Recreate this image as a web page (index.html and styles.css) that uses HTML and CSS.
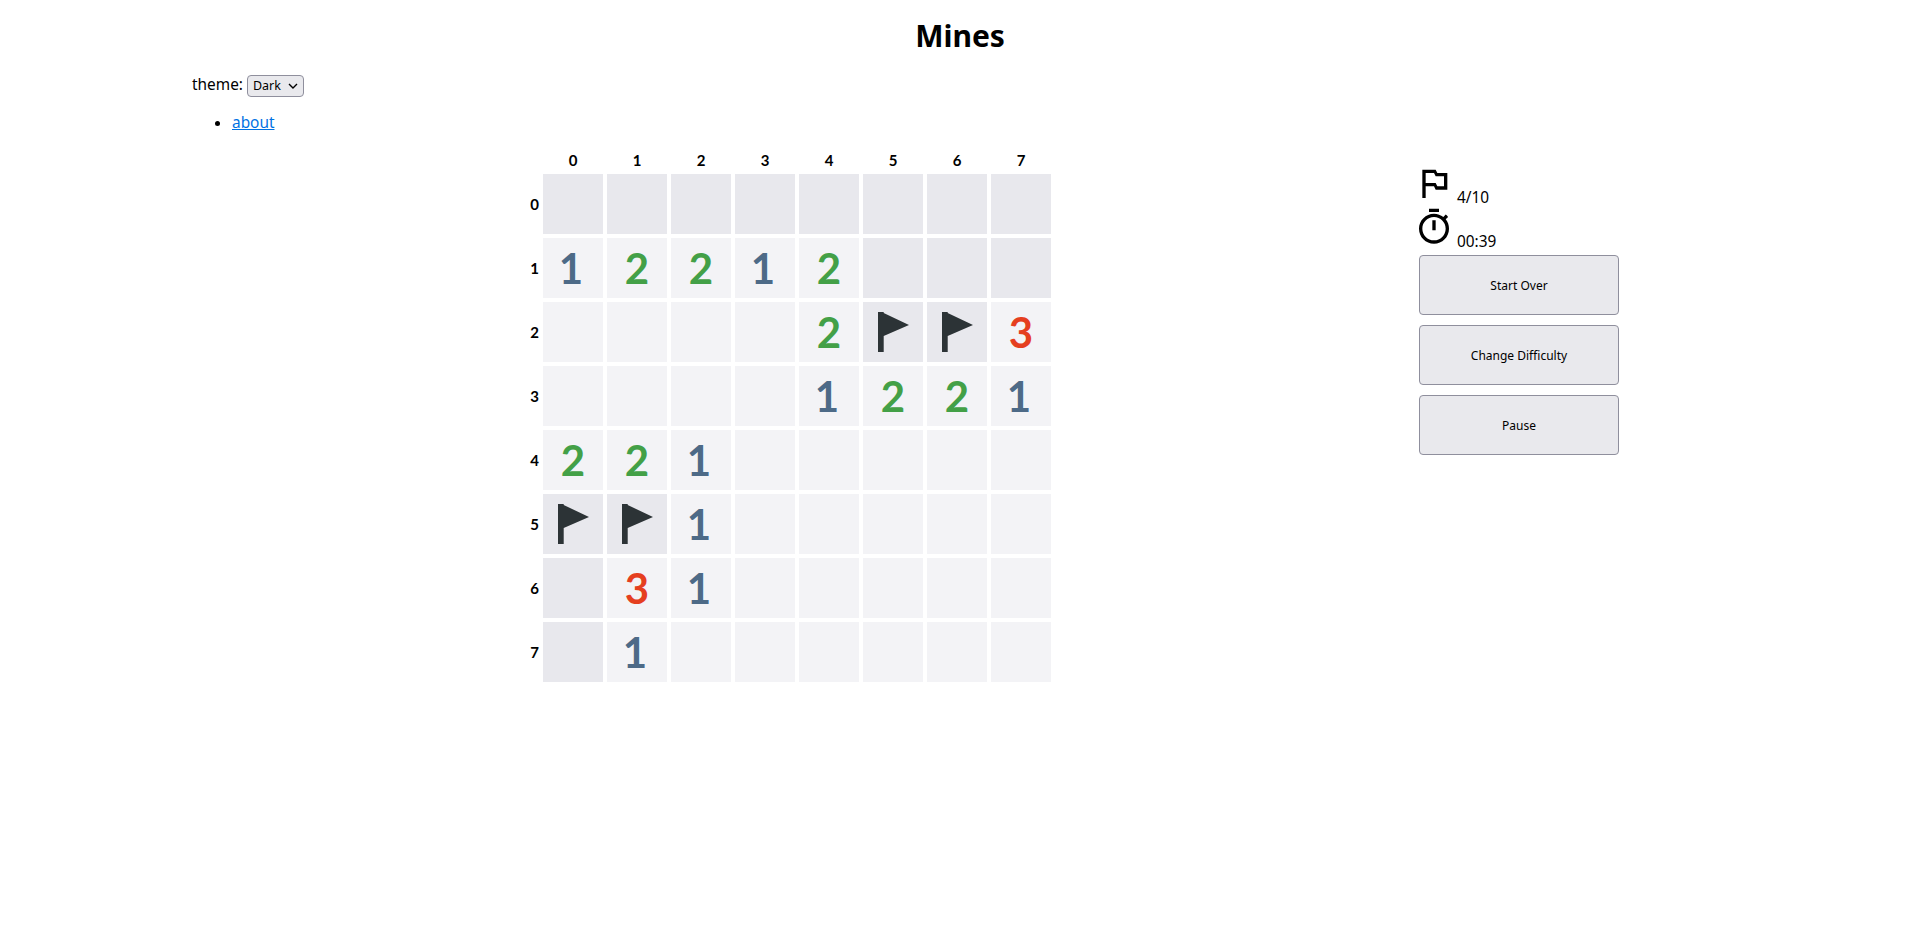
FILE: index.html
```html
<!DOCTYPE html>
<html lang="en">
<head>
  <meta charset="utf-8">
  <meta name="viewport" content="width=device-width, initial-scale=1">
  <title>Mines</title>
  <link rel="stylesheet" href="styles.css">
</head>
<body>
  <h1 class="title">Mines</h1>
  <div class="page">
    <div class="theme">
      <label for="theme">theme:</label>
      <select id="theme"><option>Dark</option><option>Light</option></select>
    </div>
    <ul class="links">
      <li><a href="#about">about</a></li>
    </ul>
    <div class="game">
      <div class="board" id="board"></div>
      <div class="side">
        <div class="stat">
          <svg class="stat-icon" viewBox="0 0 24 24"><path d="M14 6l-1-2H5v17h2v-7h5l1 2h7V6h-6zm4 8h-4l-1-2H7V6h5l1 2h5v6z"/></svg>
          <span class="stat-value">4/10</span>
        </div>
        <div class="stat">
          <svg class="stat-icon" viewBox="0 0 24 24"><path d="M15 1H9v2h6V1zm-4 13h2V8h-2v6zm8.03-6.61l1.42-1.42c-.43-.51-.9-.99-1.41-1.41l-1.42 1.42C16.07 4.74 14.12 4 12 4c-4.97 0-9 4.03-9 9s4.02 9 9 9 9-4.03 9-9c0-2.12-.74-4.07-1.97-5.61zM12 20c-3.87 0-7-3.13-7-7s3.13-7 7-7 7 3.13 7 7-3.13 7-7 7z"/></svg>
          <span class="stat-value">00:39</span>
        </div>
        <button class="action">Start Over</button>
        <button class="action">Change Difficulty</button>
        <button class="action">Pause</button>
      </div>
    </div>
  </div>

  <script>
    // . revealed, # covered, F flag, digits are counts
    const rows = [
      "########",
      "12212###",
      "....2FF3",
      "....1221",
      "221.....",
      "FF1.....",
      "#31.....",
      "#1......"
    ];
    const flag = '<svg class="flag" viewBox="0 0 60 60"><path d="M15 10h5.7v1L46 23 20.7 34v16H15z"/></svg>';
    const board = document.getElementById("board");

    function addLabel(text) {
      const el = document.createElement("div");
      el.className = "label";
      el.innerText = text;
      board.appendChild(el);
    }

    addLabel("");
    for (let c = 0; c < 8; c++) addLabel(c);

    rows.forEach((row, r) => {
      addLabel(r);
      row.split("").forEach(ch => {
        const cell = document.createElement("div");
        cell.className = "cell";
        if (ch === "#") cell.classList.add("covered");
        else if (ch === "F") { cell.classList.add("covered"); cell.innerHTML = flag; }
        else if (ch !== ".") { cell.classList.add("n" + ch); cell.innerText = ch; }
        board.appendChild(cell);
      });
    });
  </script>
</body>
</html>
```

FILE: styles.css
```css
body {
  margin: 0;
  background: #fff;
  color: #000;
  font-family: "Noto Sans", sans-serif;
  font-size: 16px;
}
.title {
  margin: 0;
  padding-top: 15px;
  height: 60px;
  box-sizing: border-box;
  font-size: 30px;
  line-height: 42px;
  font-weight: 700;
  text-align: center;
}
.page {
  padding: 0 301px 0 192px;
}
.theme {
  height: 41px;
  padding-top: 14px;
  box-sizing: border-box;
  font-size: 15.4px;
}
.theme select {
  appearance: none;
  width: 57px;
  height: 22px;
  padding: 0 0 0 5px;
  font-family: inherit;
  font-size: 12.5px;
  background: #e9e9ed url("data:image/svg+xml,%3Csvg xmlns='http://www.w3.org/2000/svg' width='10' height='6'%3E%3Cpath d='M1 1l4 4 4-4' fill='none' stroke='%23000' stroke-width='1.4'/%3E%3C/svg%3E") no-repeat right 5px center;
  border: 1px solid #8f8f9d;
  border-radius: 4px;
  color: #000;
}
.links {
  margin: 11px 0 0;
  padding-left: 40px;
  line-height: 22px;
  font-size: 15.4px;
}
.links a {
  color: #0071e3;
}
.game {
  display: flex;
  justify-content: space-between;
  margin-top: 16px;
  padding-left: 323px;
}
.board {
  display: grid;
  grid-template-columns: 24px repeat(8, 60px);
  grid-template-rows: 20px repeat(8, 60px);
  gap: 4px;
}
.label {
  display: flex;
  align-items: center;
  justify-content: center;
  font-family: Lato, sans-serif;
  font-size: 15px;
  font-weight: 700;
}
.label:nth-child(9n + 1) {
  justify-content: flex-end;
}
.cell {
  display: flex;
  align-items: center;
  justify-content: center;
  background: #f3f3f6;
  font-family: Lato, sans-serif;
  font-size: 42px;
  font-weight: 700;
  line-height: 60px;
}
.covered {
  background: #e8e8ed;
}
.n1 {
  color: #4d6a87;
  padding-right: 4px;
}
.n2 { color: #43a047; }
.n3 { color: #e53f1f; }
.flag {
  width: 60px;
  height: 60px;
  fill: #2c3336;
}
.side {
  display: flex;
  flex-direction: column;
  width: 200px;
  padding-top: 12px;
}
.stat {
  display: flex;
  align-items: flex-end;
  gap: 3px;
  height: 44px;
  margin-left: -5px;
  font-size: 15.4px;
  line-height: 20px;
}
.stat-icon {
  width: 40px;
  height: 40px;
  margin-bottom: 3px;
  fill: #000;
}
.stat-value {
  margin-bottom: -2px;
}
.action {
  height: 60px;
  margin-top: 10px;
  font-family: inherit;
  font-size: 12px;
  background: #e9e9ed;
  border: 1px solid #8f8f9d;
  border-radius: 4px;
  color: #000;
}
.stat + .action {
  margin-top: 5px;
}
```
